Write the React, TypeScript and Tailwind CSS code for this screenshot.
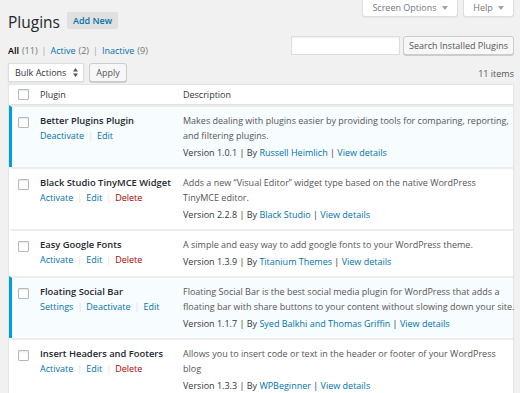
import React from 'react'

type Action = { label: string; danger?: boolean }
type Plugin = {
  name: string
  active: boolean
  actions: Action[]
  desc: string[]
  version: string
  author: string
}

const plugins: Plugin[] = [
  {
    name: 'Better Plugins Plugin',
    active: true,
    actions: [{ label: 'Deactivate' }, { label: 'Edit' }],
    desc: [
      'Makes dealing with plugins easier by providing tools for comparing, reporting,',
      'and filtering plugins.',
    ],
    version: '1.0.1',
    author: 'Russell Heimlich',
  },
  {
    name: 'Black Studio TinyMCE Widget',
    active: false,
    actions: [{ label: 'Activate' }, { label: 'Edit' }, { label: 'Delete', danger: true }],
    desc: ['Adds a new \u201cVisual Editor\u201d widget type based on the native WordPress', 'TinyMCE editor.'],
    version: '2.2.8',
    author: 'Black Studio',
  },
  {
    name: 'Easy Google Fonts',
    active: false,
    actions: [{ label: 'Activate' }, { label: 'Edit' }, { label: 'Delete', danger: true }],
    desc: ['A simple and easy way to add google fonts to your WordPress theme.'],
    version: '1.3.9',
    author: 'Titanium Themes',
  },
  {
    name: 'Floating Social Bar',
    active: true,
    actions: [{ label: 'Settings' }, { label: 'Deactivate' }, { label: 'Edit' }],
    desc: [
      'Floating Social Bar is the best social media plugin for WordPress that adds a',
      'floating bar with share buttons to your content without slowing down your site.',
    ],
    version: '1.1.7',
    author: 'Syed Balkhi and Thomas Griffin',
  },
  {
    name: 'Insert Headers and Footers',
    active: false,
    actions: [{ label: 'Activate' }, { label: 'Edit' }, { label: 'Delete', danger: true }],
    desc: ['Allows you to insert code or text in the header or footer of your WordPress', 'blog'],
    version: '1.3.3',
    author: 'WPBeginner',
  },
]

function Checkbox() {
  return (
    <span className="block w-[11px] h-[11px] bg-white border border-[#b4b9be] rounded-[1px] shadow-[inset_0_1px_2px_rgba(0,0,0,0.1)]" />
  )
}

function Caret() {
  return (
    <svg width="6" height="4" viewBox="0 0 6 4" className="ml-[5px]">
      <path d="M0 0 L6 0 L3 4 Z" fill="#a0a5aa" />
    </svg>
  )
}

function PluginRow({ p }: { p: Plugin }) {
  return (
    <div
      className={`flex border-t-2 border-t-[#ececec] border-l-[3px] ${
        p.active ? 'bg-[#f7fcfe] border-l-[#00a0d2]' : 'bg-white border-l-transparent'
      }`}
    >
      <div className="w-[28px] shrink-0 pl-[6px] pt-[10px]">
        <Checkbox />
      </div>
      <div className="w-[133px] shrink-0 pt-[6px] pb-[7px]">
        <div className="leading-[15px] text-[9.4px] font-semibold text-[#23282d] whitespace-nowrap">{p.name}</div>
        <div className="leading-[15px] flex items-center whitespace-nowrap">
          {p.actions.map((a, i) => (
            <span key={a.label} className="flex items-center">
              {i > 0 && <span className="mx-[4px] text-[#ddd]">|</span>}
              <span className={a.danger ? 'text-[#a00]' : 'text-[#0073aa]'}>{a.label}</span>
            </span>
          ))}
        </div>
      </div>
      <div className="flex-1 pl-[10px] pt-[6px] pb-[7px]">
        {p.desc.map((l) => (
          <div key={l} className="leading-[15px] text-[#555] whitespace-nowrap">
            {l}
          </div>
        ))}
        <div className="leading-[15px] mt-[2px] text-[#32373c] whitespace-nowrap">
          Version {p.version} | By <span className="text-[#0073aa]">{p.author}</span> |{' '}
          <span className="text-[#0073aa]">View details</span>
        </div>
      </div>
    </div>
  )
}

export default function App() {
  return (
    <div
      className="w-[520px] h-[393px] overflow-hidden bg-[#f1f1f1] pl-[8px] pr-[6px] text-[9px] text-[#444]"
      style={{ fontFamily: '"Open Sans", sans-serif' }}
    >
      {/* title + screen meta */}
      <div className="flex justify-between items-start h-[29px]">
        <div className="flex items-center pt-[12px] h-[29px]">
          <h1 className="text-[15.5px] leading-[17px] text-[#23282d] pt-[3px]">Plugins</h1>
          <span className="ml-[7px] h-[17px] px-[6px] flex items-center bg-[#e0e0e0] text-[#0073aa] font-semibold text-[9px] rounded-[2px]">
            Add New
          </span>
        </div>
        <div className="flex gap-[5px]">
          <span className="w-[96px] h-[17px] flex items-center justify-center bg-white border border-t-0 border-[#ddd] rounded-b-[3px] shadow-[0_1px_1px_rgba(0,0,0,0.04)] text-[#72777c]">
            Screen Options
            <Caret />
          </span>
          <span className="w-[51px] h-[17px] flex items-center justify-center bg-white border border-t-0 border-[#ddd] rounded-b-[3px] shadow-[0_1px_1px_rgba(0,0,0,0.04)] text-[#72777c]">
            Help
            <Caret />
          </span>
        </div>
      </div>

      {/* filters + search */}
      <div className="flex justify-between items-start mt-[7px]">
        <div className="pt-[7px] leading-[15px] flex items-center">
          <span className="font-semibold text-[#000]">All</span>
          <span className="ml-[3px] text-[#72777c]">(11)</span>
          <span className="mx-[4px] text-[#a0a5aa]">|</span>
          <span className="text-[#0073aa]">Active</span>
          <span className="ml-[3px] text-[#72777c]">(2)</span>
          <span className="mx-[4px] text-[#a0a5aa]">|</span>
          <span className="text-[#0073aa]">Inactive</span>
          <span className="ml-[3px] text-[#72777c]">(9)</span>
        </div>
        <div className="flex items-start gap-[3px]">
          <span className="w-[109px] h-[19px] bg-white border border-[#ddd] shadow-[inset_0_1px_2px_rgba(0,0,0,0.07)]" />
          <span className="w-[111px] h-[19px] flex items-center justify-center bg-[#f7f7f7] border border-[#ccc] rounded-[3px] shadow-[0_1px_0_#ccc] text-[#555] whitespace-nowrap">
            Search Installed Plugins
          </span>
        </div>
      </div>

      {/* bulk actions */}
      <div className="flex justify-between items-center mt-[5px] h-[19px]">
        <div className="flex items-center gap-[5px]">
          <span className="w-[76px] h-[19px] flex items-center justify-between pl-[6px] pr-[5px] bg-white border border-[#ddd] shadow-[0_1px_2px_rgba(0,0,0,0.07)] text-[#32373c]">
            Bulk Actions
            <svg width="5" height="9" viewBox="0 0 5 9">
              <path d="M0 3.5 L2.5 0 L5 3.5 Z M0 5.5 L5 5.5 L2.5 9 Z" fill="#555" />
            </svg>
          </span>
          <span className="w-[38px] h-[19px] flex items-center justify-center bg-[#f7f7f7] border border-[#ccc] rounded-[3px] shadow-[0_1px_0_#ccc] text-[#555]">
            Apply
          </span>
        </div>
        <span className="text-[#555] pt-[2px]">11 items</span>
      </div>

      {/* table */}
      <div className="mt-[2px] bg-white border border-[#e5e5e5] shadow-[0_1px_1px_rgba(0,0,0,0.04)]">
        <div className="flex h-[20px] items-center border-b border-[#e1e1e1] border-l-[3px] border-l-transparent">
          <div className="w-[28px] shrink-0 pl-[6px]">
            <Checkbox />
          </div>
          <div className="w-[133px] shrink-0 text-[#32373c]">Plugin</div>
          <div className="flex-1 pl-[10px] text-[#32373c]">Description</div>
        </div>
        {plugins.map((p) => (
          <PluginRow key={p.name} p={p} />
        ))}
      </div>
    </div>
  )
}
